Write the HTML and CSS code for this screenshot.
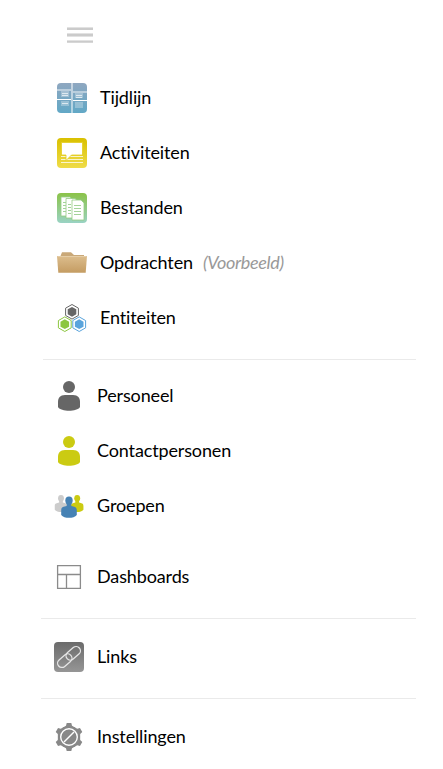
FILE: index.html
```html
<!DOCTYPE html>
<html lang="nl">
<head>
<meta charset="utf-8">
<title>Menu</title>
<link rel="stylesheet" href="styles.css">
</head>
<body>
<svg class="defs" width="0" height="0">
  <defs>
    <linearGradient id="blue" x2="0" y2="1"><stop stop-color="#8fa7c0"/><stop offset="1" stop-color="#62a8c6"/></linearGradient>
    <linearGradient id="yellow" x2="0" y2="1"><stop stop-color="#d9c000"/><stop offset="1" stop-color="#efdc48"/></linearGradient>
    <linearGradient id="green" x2="0" y2="1"><stop stop-color="#8bc348"/><stop offset="1" stop-color="#9ad3c4"/></linearGradient>
    <linearGradient id="tan" x2="0" y2="1"><stop stop-color="#dcbd8d"/><stop offset="1" stop-color="#c49c62"/></linearGradient>
    <linearGradient id="gray" x2="0" y2="1"><stop stop-color="#6b6b6b"/><stop offset="1" stop-color="#969696"/></linearGradient>
    <g id="person"><circle cx="15" cy="6" r="6"/><path d="M11 14h8c5 0 7 3 7 7v5c-3 5-19 5-22 0v-5c0-4 2-7 7-7z"/></g>
    <g id="member"><ellipse cx="0" cy="4.200" rx="3.700" ry="4.200"/><path d="M-2.300 7h4.600v2.500c3 1 5.500.5 5.500 4.500v4.500c-3 3.800-12.600 3.800-15.600 0V14c0-4 2.500-3.500 5.500-4.500z"/></g>
    <g id="hex"><path d="M0-7.3 6.4-3.65V3.65L0 7.3-6.4 3.65V-3.65z" fill="#fff" stroke="currentColor" stroke-width="1"/><path d="M0-4.9 4.3-2.45V2.45L0 4.9-4.3 2.45V-2.45z" fill="currentColor"/></g>
    <path id="tooth" d="M8.500 6 12 3.800 12.700 1h4.600l.7 2.800L21.500 6z"/>
  </defs>
</svg>
<nav class="menu">
  <button class="toggle" aria-label="Menu"><svg width="26" height="17" viewBox="0 0 26 17"><path d="M0 0h26v3H0zM0 6h26v4H0zM0 13h26v3H0z" fill="#e2e2e2"/><path d="M0 1h26v2H0zM0 7h26v2H0zM0 14h26v1.500H0z" fill="#cbcbcb"/></svg></button>
  <ul class="list primary">
    <li class="item"><svg class="icon" viewBox="0 0 30 30"><rect width="30" height="30" rx="4" fill="url(#blue)"/><g fill="#fff"><path d="M0 6h14v2H0zM16 8h14v2H16z" opacity=".45"/><path d="M14 0h2v30h-2z" opacity=".5"/><path d="M0 16h14v1H0zM16 17h14v1H16z"/><path d="M4 8h8v6H4zM18 10h8v5h-8zM4 18h8v5H4zM18 19h8v6h-8z" opacity=".28"/><path d="M5 10h6v1H5zM5 12h6v1H5zM19 12h6v1h-6zM19 14h6v1h-6zM5 20h6v1H5z" opacity=".65"/></g></svg><span class="label">Tijdlijn</span></li>
    <li class="item"><svg class="icon" viewBox="0 0 30 30"><rect width="30" height="30" rx="4" fill="url(#yellow)"/><path d="M4 18.500h22M4 21.500h22M4 24.500h22" stroke="#fff" opacity=".75"/><path d="M4.500 4.500h21V17H14.500L9 22.500V17H4.500z" fill="#fff" stroke="#e3cd20" stroke-width=".8"/></svg><span class="label">Activiteiten</span></li>
    <li class="item"><svg class="icon" viewBox="0 0 30 30"><rect width="30" height="30" rx="4" fill="url(#green)"/><g fill="#fff" stroke="#94cb84" stroke-width=".8"><path d="M4 4h9l2 2v17H4z"/><path d="M9 5.500h9l2 2V25H9z"/><path d="M15 7h9l3 3v17H15z"/></g><path d="M6 9.500h3M6 12.500h3M6 15.500h3M6 18.500h3M11 11.500h3M11 14.500h3M11 17.500h3M11 20.500h3M17 12.500h7M17 15.500h7M17 18.500h7M17 21.500h7" stroke="#a4d39a"/></svg><span class="label">Bestanden</span></li>
    <li class="item"><svg class="icon" viewBox="0 0 30 30"><path d="M3.500 8 5 4.300h9L17 7h10v3H4z" fill="#c9a878"/><path d="M0 8h30l-1.300 16.800H1.300z" fill="url(#tan)"/><path d="M.5 8.500h29" stroke="#e5cda6"/></svg><span class="label">Opdrachten</span><em class="label note">(Voorbeeld)</em></li>
    <li class="item"><svg class="icon" viewBox="0 0 30 30"><use href="#hex" x="15" y="8.800" color="#666"/><use href="#hex" x="7.800" y="21.200" color="#8cc63f"/><use href="#hex" x="22.200" y="21.200" color="#5aa4dc"/></svg><span class="label">Entiteiten</span></li>
  </ul>
  <ul class="list people">
    <li class="item"><svg class="icon" viewBox="0 0 30 30"><use href="#person" fill="#666"/></svg><span class="label">Personeel</span></li>
    <li class="item"><svg class="icon" viewBox="0 0 30 30"><use href="#person" fill="#cbcb12"/></svg><span class="label">Contactpersonen</span></li>
    <li class="item"><svg class="icon" viewBox="0 0 30 30"><use href="#member" transform="translate(7 4) scale(.8)" fill="#ccc"/><use href="#member" transform="translate(23.200 4) scale(.8)" fill="#cbcb12"/><use href="#member" transform="translate(15 5.400)" fill="#4682b4"/></svg><span class="label">Groepen</span></li>
    <li class="item dashboards"><svg class="icon" viewBox="0 0 30 30"><path d="M3.600 3.600h22.800v22.800H3.600zM3.600 12.500h22.800M12.500 12.500v13.900" fill="none" stroke="#8b8b8b" stroke-width="1.300"/></svg><span class="label">Dashboards</span></li>
  </ul>
  <ul class="list tools">
    <li class="item"><svg class="icon" viewBox="0 0 30 30"><rect width="30" height="30" rx="4" fill="url(#gray)"/><g transform="rotate(-41 15 15)" fill="none" stroke="#e6e6e6" stroke-width="1.300"><rect x="1.300" y="10.700" width="16.200" height="8.600" rx="4.300"/><rect x="12.500" y="10.700" width="16.200" height="8.600" rx="4.300"/></g></svg><span class="label">Links</span></li>
  </ul>
  <ul class="list tools">
    <li class="item"><svg class="icon" viewBox="0 0 30 30"><g fill="#888"><circle cx="15" cy="15" r="11"/><use href="#tooth"/><use href="#tooth" transform="rotate(60 15 15)"/><use href="#tooth" transform="rotate(120 15 15)"/><use href="#tooth" transform="rotate(180 15 15)"/><use href="#tooth" transform="rotate(240 15 15)"/><use href="#tooth" transform="rotate(300 15 15)"/></g><circle cx="15" cy="15" r="8.300" fill="none" stroke="#fff" stroke-width="1.400"/><path d="m10 20 10-10" stroke="#fff" stroke-width="1.500"/></svg><span class="label">Instellingen</span></li>
  </ul>
</nav>
</body>
</html>
```
FILE: styles.css
```css
body {
  margin: 0;
  background: #fff;
  color: #000;
  font: 18px/24px Lato, sans-serif;
  font-variant-ligatures: none;
  letter-spacing: -0.13px;
}

.defs {
  display: block;
}

.menu {
  padding: 27px 27px 0 41px;
}

.toggle {
  display: block;
  height: 17px;
  margin: 0 0 26px 26px;
  padding: 0;
  border: 0;
  background: none;
}

.toggle svg {
  display: block;
}

.list {
  margin: 0;
  padding: 0;
  list-style: none;
}

.item {
  display: flex;
  align-items: center;
  height: 55px;
  padding-left: 13px;
  gap: 13px;
}

.primary .item {
  padding-left: 16px;
}

.icon {
  width: 30px;
  height: 30px;
  flex: none;
}

.label {
  padding-bottom: 2px;
}

.note {
  margin-left: -3px;
  color: #999;
  letter-spacing: -0.33px;
}

.people {
  margin: 14px 0 0 2px;
  padding-top: 8px;
  border-top: 1px solid #eaeaea;
}

.people .item {
  padding-left: 11px;
}

.people .dashboards {
  margin-top: 16px;
}

.tools {
  margin-top: 14px;
  padding-top: 10px;
  border-top: 1px solid #eaeaea;
}
```
